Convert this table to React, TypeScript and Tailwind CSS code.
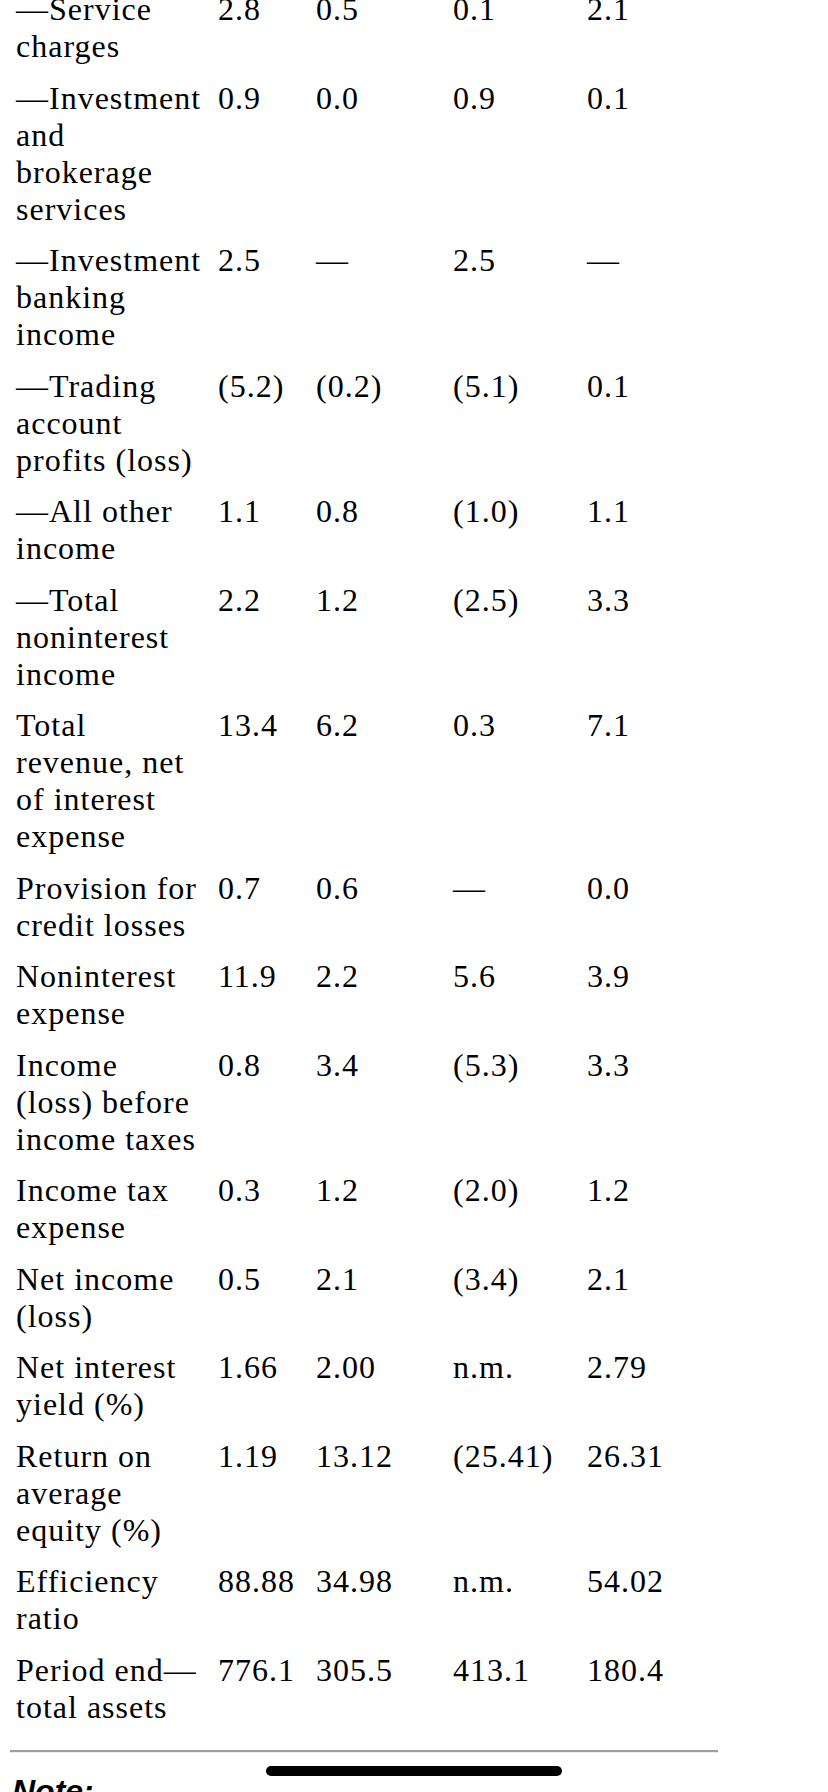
const rows: { label: string[]; values: string[] }[] = [
  { label: ["—Service", "charges"], values: ["2.8", "0.5", "0.1", "2.1"] },
  {
    label: ["—Investment", "and", "brokerage", "services"],
    values: ["0.9", "0.0", "0.9", "0.1"],
  },
  {
    label: ["—Investment", "banking", "income"],
    values: ["2.5", "—", "2.5", "—"],
  },
  {
    label: ["—Trading", "account", "profits (loss)"],
    values: ["(5.2)", "(0.2)", "(5.1)", "0.1"],
  },
  { label: ["—All other", "income"], values: ["1.1", "0.8", "(1.0)", "1.1"] },
  {
    label: ["—Total", "noninterest", "income"],
    values: ["2.2", "1.2", "(2.5)", "3.3"],
  },
  {
    label: ["Total", "revenue, net", "of interest", "expense"],
    values: ["13.4", "6.2", "0.3", "7.1"],
  },
  {
    label: ["Provision for", "credit losses"],
    values: ["0.7", "0.6", "—", "0.0"],
  },
  { label: ["Noninterest", "expense"], values: ["11.9", "2.2", "5.6", "3.9"] },
  {
    label: ["Income", "(loss) before", "income taxes"],
    values: ["0.8", "3.4", "(5.3)", "3.3"],
  },
  { label: ["Income tax", "expense"], values: ["0.3", "1.2", "(2.0)", "1.2"] },
  { label: ["Net income", "(loss)"], values: ["0.5", "2.1", "(3.4)", "2.1"] },
  {
    label: ["Net interest", "yield (%)"],
    values: ["1.66", "2.00", "n.m.", "2.79"],
  },
  {
    label: ["Return on", "average", "equity (%)"],
    values: ["1.19", "13.12", "(25.41)", "26.31"],
  },
  {
    label: ["Efficiency", "ratio"],
    values: ["88.88", "34.98", "n.m.", "54.02"],
  },
  {
    label: ["Period end—", "total assets"],
    values: ["776.1", "305.5", "413.1", "180.4"],
  },
];

function SegmentRow({ label, values }: { label: string[]; values: string[] }) {
  return (
    <div className="grid grid-cols-[202px_98px_137px_134px_1fr] pt-[7px] pb-[7.5px]">
      <div>
        {label.map((line, i) => (
          <div key={i} className="whitespace-nowrap">
            {line}
          </div>
        ))}
      </div>
      {values.map((v, i) => (
        <div key={i} className="whitespace-nowrap">
          {v}
        </div>
      ))}
    </div>
  );
}

export default function App() {
  return (
    <div className="relative h-[1792px] overflow-hidden bg-white text-black">
      <div className="-mt-[16px] pl-[16px] font-['Liberation_Serif',Georgia,serif] text-[32px] leading-[37px] tracking-[1px]">
        {rows.map((row, i) => (
          <SegmentRow key={i} label={row.label} values={row.values} />
        ))}
      </div>

      <div className="ml-[10px] mt-[17px] w-[708px] border-t-2 border-b border-t-[#a0a0a0] border-b-[#ececec]" />

      <p className="mt-[18px] pl-[12px] font-['Liberation_Sans',Arial,sans-serif] text-[32px] leading-[40px] font-bold italic">
        Note:
      </p>

      <div className="absolute left-[266px] top-[1766px] h-[10px] w-[296px] rounded-full bg-black" />
    </div>
  );
}
